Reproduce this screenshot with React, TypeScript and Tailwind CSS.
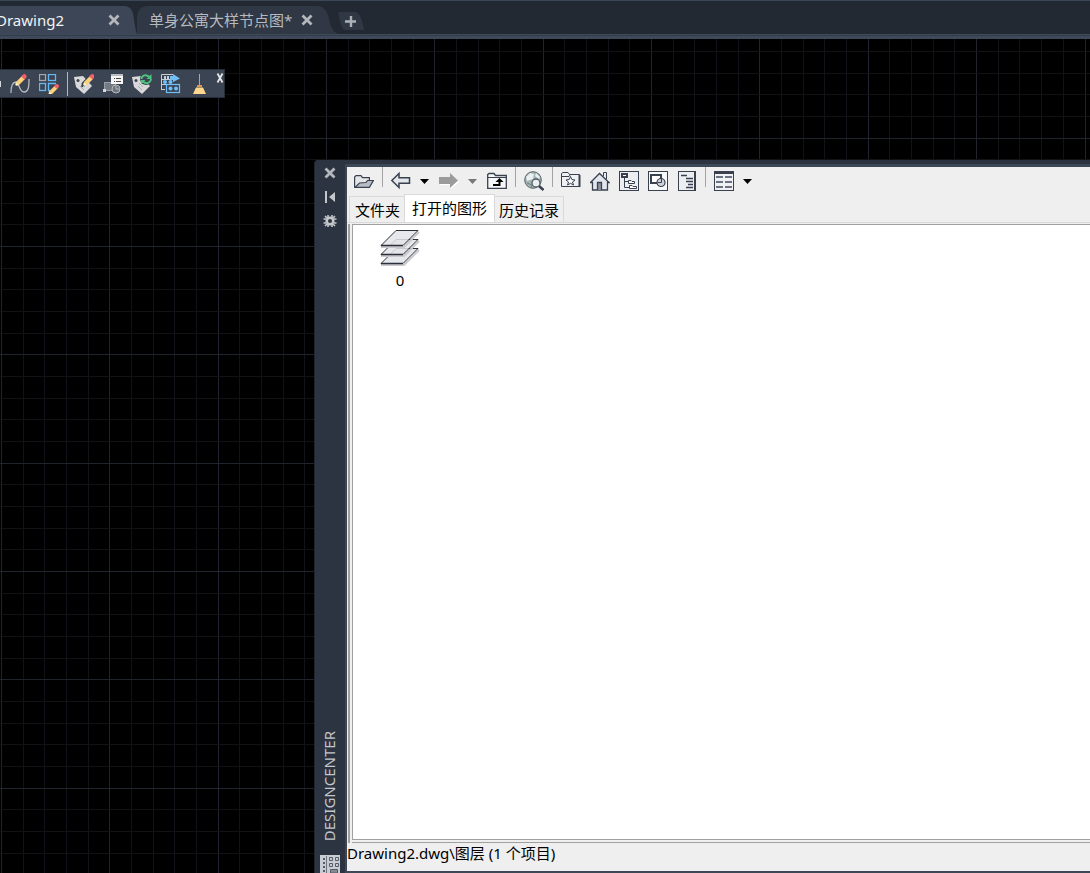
import React from "react";

const minor = 21.67;

// every fifth line of the drawing grid is a major one
function Grid() {
  const lines = Array.from({ length: 120 }, (_, i) => i);
  return (
    <svg className="absolute inset-0 h-full w-full" shapeRendering="crispEdges" aria-hidden="true">
      {lines.map((i) => (
        <rect key={"v" + i} x={Math.round(1 + i * minor)} y="0" width="1" height="100%" fill={i % 5 === 0 ? "#212430" : "#121318"} />
      ))}
      {lines.map((i) => (
        <rect key={"h" + i} x="0" y={Math.round(12 + i * minor)} width="100%" height="1" fill={i % 5 === 4 ? "#20252d" : "#111216"} />
      ))}
    </svg>
  );
}

function Icon({ children, w = 20, h = 20 }: { children: React.ReactNode; w?: number; h?: number }) {
  return (
    <svg width={w} height={h} viewBox={`0 0 ${w} ${h}`} fill="none" className="block shrink-0" aria-hidden="true">
      {children}
    </svg>
  );
}

function Tool({ label, children }: { label: string; children: React.ReactNode }) {
  return (
    <button type="button" aria-label={label} title={label} className="block shrink-0">
      {children}
    </button>
  );
}

function Cross() {
  return (
    <Icon w={12} h={12}>
      <path d="M1.500 1.500 10.500 10.500M10.500 1.500 1.500 10.500" stroke="#b4b8bd" strokeWidth="2.800" />
    </Icon>
  );
}

function Pencil() {
  return (
    <>
      <path d="M8 14 9 10 15 4 18 7 12 13Z" fill="#fbd27c" />
      <path d="M8 14 9 10.5 11.5 13Z" fill="#fff3d8" />
      <path d="M8 14 8.5 12.5 9.5 13.5Z" fill="#333" />
      <path d="M14 4.500 16 2.500Q18 1.500 19 3Q20.500 4.500 18.500 6.500L17.500 7.500Z" fill="#f0606a" />
    </>
  );
}

function Tag() {
  return (
    <>
      <path d="M0 3 9 2 18 12 10 20 2 13Z" fill="#d9d9d9" />
      <circle cx="4" cy="6.500" r="1.500" fill="#3a4350" />
      <path d="M7 9 11 13M6 12 10 16" stroke="#a8abb0" />
    </>
  );
}

function FileTabs() {
  return (
    <header className="flex h-[34px] items-end border-t border-[#3b4757] bg-[#222933]">
      <div className="flex h-7 w-[125px] shrink-0 items-center justify-between bg-[#3c4656] pr-[5px]">
        <a href="#drawing2" className="-ml-1 text-[15px] leading-7 text-[#f2f3f4]">Drawing2</a>
        <button type="button" aria-label="关闭 Drawing2"><Cross /></button>
      </div>
      <Icon w={12} h={28}>
        <path d="M0 0C7 1 8 6 9 13C10 21 11 26 12 28H0Z" fill="#3c4656" />
      </Icon>
      <div className="flex h-7 shrink-0 items-center gap-[9px] rounded-tl-[10px] bg-[#303845] pl-3 pr-[5px]">
        <a href="#apartment" className="text-[15px] leading-7 text-[#b6babf]">单身公寓大样节点图*</a>
        <button type="button" aria-label="关闭 单身公寓大样节点图"><Cross /></button>
      </div>
      <Icon w={20} h={28}>
        <path d="M0 0C7 1 9 5 11 13C13 21 15 26 20 28H0Z" fill="#303845" />
      </Icon>
      <button type="button" aria-label="新图形" className="mb-1">
        <Icon w={26} h={18}>
          <path d="M0 0H16C22 0 24 7 26 18H8C3 18 2 8 0 0Z" fill="#303845" />
          <path d="M13 4V15M7 9.500H18" stroke="#aeb2b8" strokeWidth="2.400" />
        </Icon>
      </button>
    </header>
  );
}

function ModifyBar() {
  return (
    <div className="flex h-[29px] w-[225px] items-center border border-l-0 border-[#272e39] bg-[#3b4452]">
      <div className="flex items-center gap-[9px]">
        <Icon w={1}><rect y="7" width="1" height="6" fill="#d5d7da" /></Icon>
        <Tool label="编辑样条曲线">
          <Icon>
            <path d="M1 19C1 11 3 8 6 8S9 18 14 18 19 11 19 5" stroke="#b7bbc0" strokeWidth="1.300" />
            <g transform="translate(-3 -2)"><Pencil /></g>
          </Icon>
        </Tool>
        <Tool label="编辑阵列">
          <Icon>
            <rect x=".5" y=".5" width="6" height="6" stroke="#a5a9ae" strokeWidth="1.300" />
            <rect x="9.500" y=".5" width="7" height="6" stroke="#66b7f2" strokeWidth="1.300" />
            <rect x=".5" y="9.500" width="6" height="7" stroke="#66b7f2" strokeWidth="1.300" />
            <path d="M17 9.500H9.500V16.500H11" stroke="#66b7f2" strokeWidth="1.300" />
            <g transform="translate(2 8) scale(.92)"><Pencil /></g>
          </Icon>
        </Tool>
        <span className="-ml-px -mr-[3px] h-6 w-px bg-[#b5b9be]" />
        <Tool label="编辑属性">
          <Icon><Tag /><path d="M8 13 9 9 16 2" stroke="#3a4350" strokeWidth="2" /><g transform="translate(1 -2)"><Pencil /></g></Icon>
        </Tool>
        <Tool label="块属性管理器">
          <Icon>
            <rect x="1.500" y="8.500" width="11" height="8" fill="#747a83" stroke="#989ca3" />
            <path d="M0 15h3v3H0z" fill="#d5d7da" />
            <circle cx="13" cy="15" r="4" fill="#6d747e" stroke="#b6b9be" />
            <path d="M13 12V15H16" stroke="#b6b9be" />
            <path d="M8 0H20V10H8Z" fill="#f5f5f5" />
            <path d="M8 0H20V2H8Z" fill="#b9bcc0" />
            <path d="M11 4.500h1M13 4.500h5M11 7.500h1M13 7.500h5" stroke="#444" />
          </Icon>
        </Tool>
        <Tool label="同步属性">
          <Icon>
            <Tag />
            <circle cx="14" cy="5" r="6" fill="#3b4452" />
            <path d="M9.500 5C10 1 14 0 17.500 3M19 5C18.500 9 14 10.500 11 7.500" stroke="#4cc47e" strokeWidth="1.800" />
            <path d="M19.500 0V5H14.500ZM9 6H13.500L9 10.500Z" fill="#4cc47e" />
          </Icon>
        </Tool>
        <Tool label="提取属性">
          <Icon>
            <path d="M.5 16V.5H12M0 5.500H10M0 10.500H5M0 15.500H4" stroke="#c9ccd0" />
            <path d="M9 2H12V0L19 4.500 12 8V6H9Z" fill="#70bff8" />
            <path d="M3 2h2v3H3zM6 2h2v3H6z" fill="#c9ccd0" />
            <circle cx="4" cy="8" r="2" fill="#70bff8" />
            <circle cx="9.500" cy="8" r="2" fill="#70bff8" />
            <rect x="5.500" y="10.500" width="13" height="8" fill="#3b4452" stroke="#70bff8" strokeWidth="1.200" />
            <circle cx="9.500" cy="14.500" r="2" fill="#70bff8" />
            <circle cx="15" cy="14.500" r="2" fill="#70bff8" />
          </Icon>
        </Tool>
        <Tool label="清理">
          <Icon>
            <path d="M9 0H10V12H9Z" fill="#c8a372" />
            <path d="M7 11H12V13H7Z" fill="#d99a50" />
            <path d="M6 13.500H13L16 20H3Z" fill="#fcd78d" />
          </Icon>
        </Tool>
      </div>
      <button type="button" aria-label="关闭工具栏" className="mb-3 ml-auto">
        <Icon w={8} h={10}><path d="M1.500 .5 6.500 9.500M6.500 .5 1.500 9.500" stroke="#e5e6e8" strokeWidth="1.800" /></Icon>
      </button>
    </div>
  );
}

function SideBar() {
  return (
    <aside className="flex w-[30px] shrink-0 flex-col items-center bg-[#2d3441] pt-[7px]">
      <div className="flex flex-col items-center gap-3">
        <Tool label="关闭"><Cross /></Tool>
        <Tool label="自动隐藏">
          <Icon w={12} h={12}><path d="M1 0H3V12H1ZM11 1V11L5 6Z" fill="#c3c6ca" /></Icon>
        </Tool>
        <Tool label="特性">
          <Icon w={14} h={12}>
            <circle cx="7" cy="6" r="3.300" stroke="#c3c6ca" strokeWidth="2.600" />
            <path d="M5 0V3M9 0V3M5 9V12M9 9V12M.5 4H3M.5 8H3M11 4H13.500M11 8H13.500M2 1 4 3M10 9 12 11M12 1 10 3M4 9 2 11" stroke="#c3c6ca" strokeWidth="1.600" />
          </Icon>
        </Tool>
      </div>
      <h1 className="mr-[3px] mt-auto rotate-180 text-[15px] leading-5 text-[#c3c6ca] [writing-mode:vertical-rl]">DESIGNCENTER</h1>
      <div className="mt-[14px]">
        <Icon w={20} h={18}>
          <path d="M0 0H20V18H0Z" fill="#c9ccd2" />
          <path d="M6.500 1V18" stroke="#6d737e" />
          <path d="M3 3h2v2H3zM3 7h2v2H3zM3 11h2v2H3zM3 15h2v2H3z" fill="#555c68" />
          <path d="M9.500 2.500H12.500V5.500H9.500ZM15.500 2.500H18.500V5.500H15.500ZM9.500 8.500H12.500V11.500H9.500ZM15.500 8.500H18.500V11.500H15.500Z" stroke="#555c68" />
          <path d="M10.500 14.500H17.500V18H10.500Z" fill="#858b96" stroke="#555c68" />
        </Icon>
      </div>
    </aside>
  );
}

function Caret({ color }: { color: string }) {
  return <Icon w={10}><path d="M0 8H9L4.500 13Z" fill={color} /></Icon>;
}

function Divider() {
  return <span className="-mx-px mb-2 h-5 w-px shrink-0 bg-[#a3a3a3]" />;
}

const ink = "#39414f";

function CenterTools() {
  return (
    <div className="flex h-7 items-center gap-[9px] pl-[7px]">
      <Tool label="加载">
        <Icon>
          <path d="M.6 16.400V6L2 4.600H7L8.500 6.600H15.400V9.500" fill="#e4e6ea" stroke={ink} strokeWidth="1.200" />
          <path d="M1 16.400 5.500 12 12 11.500 13.500 9.500H19.400L15.400 16.400Z" fill="#b8bec6" stroke={ink} strokeWidth="1.200" />
        </Icon>
      </Tool>
      <Divider />
      <Tool label="上一页">
        <Icon><path d="M.8 9.500 8 2.500V6.700H18.500V12.300H8V16.500Z" fill="#e3e6ea" stroke={ink} strokeWidth="1.500" /></Icon>
      </Tool>
      <Tool label="上一页列表"><Caret color="#000" /></Tool>
      <Tool label="下一页">
        <Icon>
          <path d="M1 7H12V3L20 11 12 18V14H1Z" fill="#fff" />
          <path d="M0 6H11V2L19 9.500 11 17V13H0Z" fill="#9b9b9b" />
        </Icon>
      </Tool>
      <Tool label="下一页列表"><Caret color="#777" /></Tool>
      <Tool label="上一级">
        <Icon>
          <path d="M.7 17.300V3.500L2 2.500H7L8.500 4.500H19.300V17.300Z" fill="#f6f7f9" stroke={ink} strokeWidth="1.300" />
          <path d="M1 6.500H19" stroke={ink} />
          <path d="M6 14H12.500V9" stroke="#000" strokeWidth="2" />
          <path d="M8.500 11 12.500 7 16.500 11Z" fill="#000" />
        </Icon>
      </Tool>
      <Divider />
      <Tool label="搜索">
        <Icon>
          <circle cx="9" cy="9" r="8.300" fill="#a3b4b5" stroke="#59656c" />
          <path d="M2 6 6 2 10 3 9 8 3 10ZM12 2 16 6 15 8 11 5Z" fill="#e9f0ef" />
          <path d="M3 12 8 14 7 17" stroke="#6f8184" />
          <circle cx="12" cy="12" r="4" fill="#e8f0f2" stroke="#555d66" strokeWidth="1.300" />
          <path d="M15 15 19.500 19" stroke={ink} strokeWidth="2.600" />
        </Icon>
      </Tool>
      <Divider />
      <Tool label="收藏夹">
        <Icon>
          <path d="M.5 15.500V2.500L2 1.500H7L8.500 3.500H18.500V15.500Z" fill="#eef0f4" stroke={ink} />
          <path d="M1 5.500H8L9 4" stroke={ink} />
          <path d="M18.500 4V16" stroke={ink} strokeWidth="2" />
          <path d="M9.500 5.500 10.800 8.500 14 9 11.500 11 12.500 14 9.500 12.300 6.500 14 7.500 11 5 9 8.200 8.500Z" fill="#fff" stroke={ink} />
        </Icon>
      </Tool>
      <Tool label="主页">
        <Icon>
          <path d="M13.500 5V1.500H16.500V8" fill="#eee" stroke={ink} />
          <path d="M.5 11.500 9.500 2.500 19 11.500H17.500V19H2.500V11.500Z" fill="#e3e6ec" stroke={ink} strokeWidth="1.300" />
          <path d="M7.500 19V11.500H11.500V19" fill="#8c939e" stroke={ink} strokeWidth="1.300" />
        </Icon>
      </Tool>
      <Tool label="树状图切换">
        <Icon>
          <rect x=".5" y=".5" width="19" height="19" fill="#eceef2" stroke={ink} />
          <rect x="3" y="3" width="5" height="3" fill="#fff" stroke={ink} strokeWidth="2" />
          <path d="M5.500 7V16.500H10M5.500 10.500H9" stroke={ink} />
          <path d="M9.500 9.500H12L13 10.500H15.500V12.500H9.500ZM10.500 14.500H13L14 15.500H17.500V17.500H10.500Z" fill="#fff" stroke={ink} />
        </Icon>
      </Tool>
      <Tool label="预览">
        <Icon>
          <rect x=".5" y=".5" width="19" height="19" fill="#f7f8fa" stroke={ink} />
          <rect x="3" y="4" width="10" height="8" fill="#fff" stroke={ink} strokeWidth="2" />
          <circle cx="13" cy="11.500" r="4" fill="#cfd3da" stroke={ink} strokeWidth="1.200" />
          <path d="M13.500 7V11.500H10" stroke={ink} />
        </Icon>
      </Tool>
      <Tool label="说明">
        <Icon>
          <rect x="1.500" y=".5" width="17" height="19" fill="#eceef2" stroke={ink} />
          <path d="M18 0V20" stroke={ink} strokeWidth="2" />
          <path d="M4 4.500H10M9 7.500H16M9 10.500H16M11 13.500H16M9 16.500H16" stroke={ink} strokeWidth="1.600" />
        </Icon>
      </Tool>
      <Divider />
      <Tool label="视图">
        <Icon>
          <rect x=".5" y=".5" width="19" height="19" fill="#f0f1f5" stroke={ink} />
          <path d="M0 0H20V3H0Z" fill={ink} />
          <path d="M2 6H9M11 6H18M2 11H9M11 11H18M2 16H9M11 16H18" stroke="#6b7383" strokeWidth="2" />
        </Icon>
      </Tool>
      <Tool label="视图列表"><Caret color="#000" /></Tool>
    </div>
  );
}

function LayersIcon() {
  const sheets = [18, 9, 0];
  return (
    <Icon w={40} h={36}>
      {sheets.map((y) => (
        <g key={y}>
          <path d={`M1 ${y + 17}H24L39 ${y + 2}`} stroke="#c9c9ce" strokeWidth="2" />
          <path d={`M1 ${y + 15.5}H23L38 ${y + 0.5}H16Z`} fill="#e2e4e8" fillOpacity=".85" stroke="#2b303a" />
          <path d={`M1 ${y + 15.5}H23`} stroke="#2b303a" strokeWidth="1.500" />
        </g>
      ))}
    </Icon>
  );
}

function DesignCenter() {
  return (
    <section className="flex flex-1 flex-col overflow-hidden rounded-tl-sm border-l border-[#20262f] bg-[#2d3441]">
      <div className="flex flex-1">
        <SideBar />
        <div className="flex min-w-0 flex-1 flex-col pt-1">
          <div className="flex flex-1 flex-col border-b-2 border-l-2 border-t-[3px] border-[#3d4857]">
            <div className="flex flex-1 flex-col bg-[#efefef]">
              <CenterTools />
              <nav className="flex h-7 items-end border-b border-[#d9d9d9] pl-0.5 text-[15px] text-black">
                <a href="#folders" className="h-[26px] border-l border-t border-[#d9d9d9] pl-[5px] pr-1 leading-[26px]">文件夹</a>
                <a href="#open" className="h-7 border border-b-0 border-[#d9d9d9] bg-white px-[7px] leading-[26px]">打开的图形</a>
                <a href="#history" className="h-[26px] border-r border-t border-[#d9d9d9] px-1 leading-[26px]">历史记录</a>
              </nav>
              <div className="flex flex-1 pt-px">
                <div className="mx-px w-[2px] bg-[#a0a0a0]" />
                <div className="ml-px flex-1 border-b border-[#a0a0a0] pb-0.5">
                  <div className="h-full border-b border-l border-t border-[#a0a0a0] bg-white">
                    <button type="button" className="ml-[27px] mt-[5px] flex w-10 flex-col items-center">
                      <LayersIcon />
                      <span className="mt-1 text-[15px] leading-5 text-black">0</span>
                    </button>
                  </div>
                </div>
              </div>
              <footer className="h-7 text-[15px] leading-5 text-black">Drawing2.dwg\图层 (1 个项目)</footer>
            </div>
          </div>
        </div>
      </div>
    </section>
  );
}

export default function App() {
  return (
    <div className="flex min-h-screen flex-col overflow-hidden bg-black font-['Noto_Sans','Noto_Sans_CJK_SC',sans-serif]">
      <FileTabs />
      <div className="h-[5px] border-b-[3px] border-t border-[#3e4a5a] bg-[#323b49]" />
      <main className="relative flex flex-1 flex-col">
        <Grid />
        <div className="relative pt-[30px]">
          <ModifyBar />
        </div>
        <div className="relative flex flex-1 pl-[314px] pt-[62px]">
          <DesignCenter />
        </div>
      </main>
    </div>
  );
}
